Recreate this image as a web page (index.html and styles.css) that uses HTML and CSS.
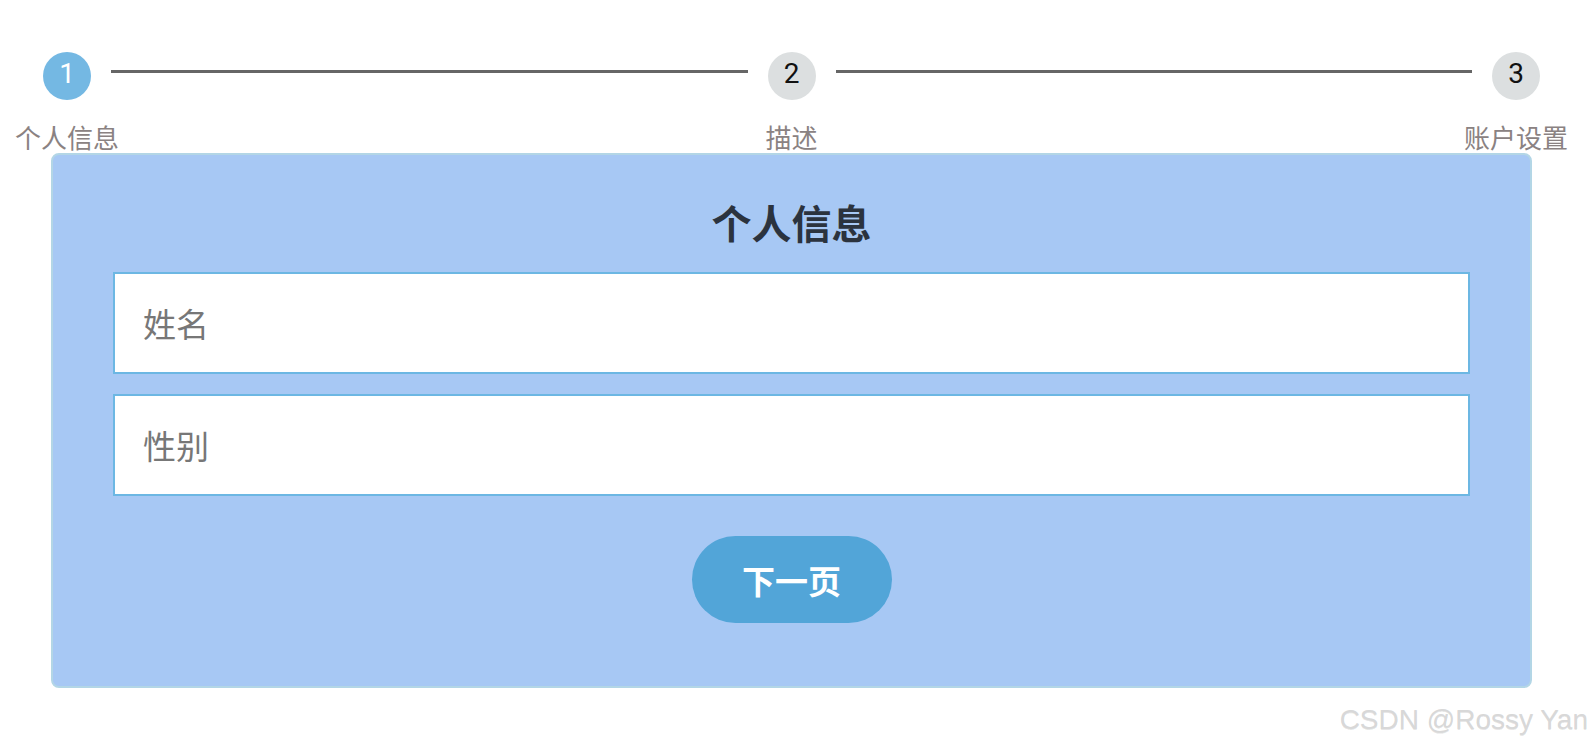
FILE: index.html
```html
<!DOCTYPE html>
<html lang="zh-CN">
<head>
<meta charset="utf-8">
<title>步骤表单</title>
<link rel="stylesheet" href="styles.css">
</head>
<body>
<div class="page">
  <div class="steps">
    <div class="step">
      <div class="dot dot-active">1</div>
      <div class="label">个人信息</div>
    </div>
    <div class="line"></div>
    <div class="step">
      <div class="dot">2</div>
      <div class="label">描述</div>
    </div>
    <div class="line"></div>
    <div class="step">
      <div class="dot">3</div>
      <div class="label">账户设置</div>
    </div>
  </div>
  <form class="card">
    <h2 class="card-title">个人信息</h2>
    <input class="field" type="text" placeholder="姓名">
    <input class="field" type="text" placeholder="性别">
    <button class="next" type="button">下一页</button>
  </form>
  <div class="watermark">CSDN @Rossy Yan</div>
</div>
</body>
</html>
```

FILE: styles.css
```css
html, body {
  margin: 0;
  padding: 0;
  background: #ffffff;
}

body {
  font-family: "Noto Sans CJK SC", "Noto Sans", sans-serif;
}

.page {
  position: relative;
  width: 1594px;
  height: 748px;
  overflow: hidden;
}

.steps {
  display: flex;
  align-items: flex-start;
  padding: 52px 54px 0 43px;
}

.step {
  width: 48px;
  flex: none;
  display: flex;
  flex-direction: column;
  align-items: center;
}

.dot {
  width: 48px;
  height: 48px;
  border-radius: 50%;
  background: #dcdfe0;
  color: #111111;
  font-family: "Roboto", "Liberation Sans", sans-serif;
  font-size: 28px;
  line-height: 44px;
  text-align: center;
}

.dot-active {
  background: #74b8e3;
  color: #ffffff;
}

.label {
  margin-top: 24px;
  font-size: 26px;
  line-height: 26px;
  color: #8a8282;
  white-space: nowrap;
}

.line {
  flex: 1;
  height: 3px;
  margin: 18px 20px 0;
  background: #666666;
}

.card {
  margin: 3px 62px 0 51px;
  padding: 47px 60px 63px;
  background: #a7c8f4;
  border: 2px solid #b3d6e6;
  border-radius: 8px;
  display: flex;
  flex-direction: column;
  align-items: center;
}

.card-title {
  margin: 0 0 30px;
  font-size: 40px;
  line-height: 40px;
  font-weight: 700;
  color: #2b333e;
}

.field {
  box-sizing: border-box;
  width: 100%;
  height: 102px;
  margin: 0 0 20px;
  padding: 0 28px;
  border: 2px solid #6cb7e3;
  border-radius: 0;
  background: #ffffff;
  font-family: "Noto Sans CJK SC", "Noto Sans", sans-serif;
  font-size: 33px;
  color: #333333;
  outline: none;
}

.field::placeholder {
  color: #777777;
}

.next {
  margin-top: 20px;
  width: 200px;
  height: 87px;
  border: none;
  border-radius: 44px;
  background: #52a5d8;
  color: #ffffff;
  font-family: "Noto Sans CJK SC", "Noto Sans", sans-serif;
  font-size: 33px;
  font-weight: 700;
  cursor: pointer;
}

.watermark {
  position: absolute;
  right: 6px;
  top: 706px;
  font-family: "Liberation Sans", Arial, sans-serif;
  font-size: 28px;
  line-height: 28px;
  color: #d8d8d8;
  text-shadow: 0 1px 0 rgba(0, 0, 0, 0.1);
  white-space: nowrap;
}
```
